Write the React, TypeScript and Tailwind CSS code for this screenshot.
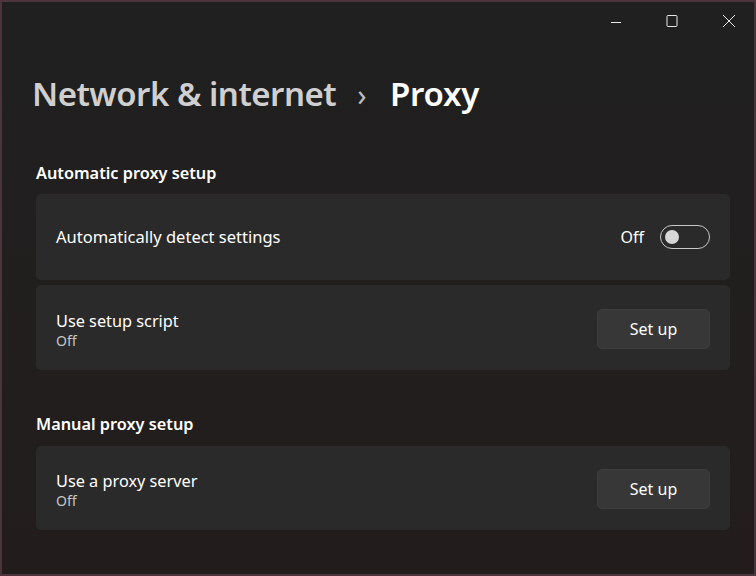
import React from "react";

const font = { fontFamily: '"Noto Sans", "Open Sans", sans-serif' };

function Toggle() {
  return (
    <div className="w-[50px] h-[24px] rounded-full border border-[#c8c8c8] flex items-center px-[4px]">
      <div className="w-[14px] h-[14px] rounded-full bg-[#d6d6d6]" />
    </div>
  );
}

function SetUpButton() {
  return (
    <button className="w-[113px] h-[40px] mt-[2px] rounded-[5px] bg-[#373737] border border-[#3d3d3d] text-[16px] text-white flex items-center justify-center">
      Set up
    </button>
  );
}

function Card({ children, h }: { children: React.ReactNode; h: string }) {
  return (
    <div className={`rounded-[5px] bg-[#2b2a2a] flex items-center justify-between pl-[20px] pr-[20px] ${h}`}>
      {children}
    </div>
  );
}

export default function App() {
  return (
    <div
      className="w-[756px] h-[576px] border-2 border-[#4c343d] bg-gradient-to-b from-[#202020] to-[#221d1c] flex flex-col text-white overflow-hidden"
      style={font}
    >
      <div className="h-[38px] flex justify-end items-center pr-[18px] gap-[44px] text-[#e8e8e8]">
        <svg width="12" height="12" viewBox="0 0 12 12" className="mt-[2px]">
          <line x1="1" y1="6.5" x2="11" y2="6.5" stroke="currentColor" strokeWidth="1" />
        </svg>
        <svg width="12" height="12" viewBox="0 0 12 12">
          <rect x="1" y="0.5" width="10" height="11" rx="1" fill="none" stroke="currentColor" strokeWidth="1" />
        </svg>
        <svg width="14" height="14" viewBox="0 0 14 14">
          <path d="M1 1 L13 13 M13 1 L1 13" stroke="currentColor" strokeWidth="1" />
        </svg>
      </div>
      <div className="pl-[30px] mt-[32px] flex items-baseline text-[33px] font-semibold leading-[44px] tracking-[-0.5px]">
        <span className="text-[#cfcfcf]">Network &amp; internet</span>
        <span className="text-[#bdbdbd] text-[30px] ml-[21px] mr-[24px] font-normal">›</span>
        <span className="text-white tracking-[-0.2px]">Proxy</span>
      </div>
      <div className="pr-[24px] pl-[34px] mt-[45px] flex flex-col">
        <div className="text-[16.3px] font-semibold leading-[22px] mb-[10px]">Automatic proxy setup</div>
        <Card h="h-[86px]">
          <span className="text-[16.5px]">Automatically detect settings</span>
          <div className="flex items-center gap-[16px]">
            <span className="text-[16px]">Off</span>
            <Toggle />
          </div>
        </Card>
        <div className="h-[5px]" />
        <Card h="h-[85px]">
          <div className="flex flex-col leading-[20px] pt-[6px]">
            <span className="text-[16.3px]">Use setup script</span>
            <span className="text-[14px] text-[#c5c5c5]">Off</span>
          </div>
          <SetUpButton />
        </Card>
        <div className="text-[16.3px] font-semibold leading-[22px] mt-[43px] mb-[11px]">Manual proxy setup</div>
        <Card h="h-[84px]">
          <div className="flex flex-col leading-[20px] pt-[6px]">
            <span className="text-[16.3px]">Use a proxy server</span>
            <span className="text-[14px] text-[#c5c5c5]">Off</span>
          </div>
          <SetUpButton />
        </Card>
      </div>
    </div>
  );
}
